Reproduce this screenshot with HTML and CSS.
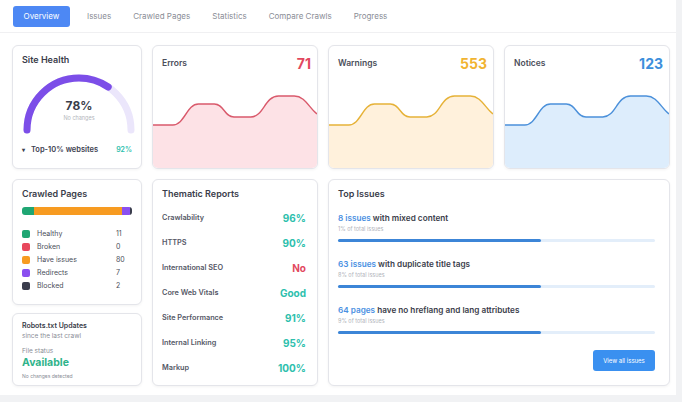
FILE: index.html
```html
<!DOCTYPE html>
<html>
  <head>
    <meta charset="utf-8">
    <title>Site Audit</title>
    <link rel="stylesheet" href="styles.css">
  </head>
  <body>
    <div class="app">
      <nav class="tabs">
        <a class="tab active">Overview</a>
        <a class="tab">Issues</a>
        <a class="tab">Crawled Pages</a>
        <a class="tab">Statistics</a>
        <a class="tab">Compare Crawls</a>
        <a class="tab">Progress</a>
      </nav>

      <main class="grid">
        <!-- site health gauge -->
        <section class="card health">
          <h2 class="card-title">Site Health</h2>
          <div class="gauge">
            <svg viewBox="0 0 114 62" width="114" height="62">
              <path d="M5 56 A52 52 0 0 1 109 56" fill="none" stroke="#ebe6fb" stroke-width="7" stroke-linecap="round"/>
              <path d="M5 56 A52 52 0 0 1 109 56" fill="none" stroke="#7c4ee8" stroke-width="7" stroke-linecap="round" pathLength="100" stroke-dasharray="69 200"/>
            </svg>
            <div class="gauge-text">
              <div class="gauge-value">78%</div>
              <div class="gauge-sub">No changes</div>
            </div>
          </div>
          <div class="health-foot">
            <span><span class="caret">&#9662;</span>Top-10% websites</span>
            <span class="teal">92%</span>
          </div>
        </section>

        <section class="card stat">
          <div class="stat-head">
            <span class="stat-name">Errors</span>
            <span class="stat-num red">71</span>
          </div>
          <svg class="spark" viewBox="0 0 166 76" preserveAspectRatio="none">
            <path d="M0 33 L20 33 C32 33 34 12 46 12 L62 12 C72 12 72 25 82 25 L99 25 C112 25 113 4 127 4 L143 4 C154 4 158 16 166 22 L166 76 L0 76 Z" fill="#fde2e6"/>
            <path d="M0 33 L20 33 C32 33 34 12 46 12 L62 12 C72 12 72 25 82 25 L99 25 C112 25 113 4 127 4 L143 4 C154 4 158 16 166 22" fill="none" stroke="#d95a6c" stroke-width="1.4"/>
          </svg>
        </section>

        <section class="card stat">
          <div class="stat-head">
            <span class="stat-name">Warnings</span>
            <span class="stat-num amber">553</span>
          </div>
          <svg class="spark" viewBox="0 0 166 76" preserveAspectRatio="none">
            <path d="M0 33 L20 33 C32 33 34 12 46 12 L62 12 C72 12 72 25 82 25 L99 25 C112 25 113 4 127 4 L143 4 C154 4 158 16 166 22 L166 76 L0 76 Z" fill="#fff1dc"/>
            <path d="M0 33 L20 33 C32 33 34 12 46 12 L62 12 C72 12 72 25 82 25 L99 25 C112 25 113 4 127 4 L143 4 C154 4 158 16 166 22" fill="none" stroke="#e6b238" stroke-width="1.4"/>
          </svg>
        </section>

        <section class="card stat">
          <div class="stat-head">
            <span class="stat-name">Notices</span>
            <span class="stat-num blue">123</span>
          </div>
          <svg class="spark" viewBox="0 0 166 76" preserveAspectRatio="none">
            <path d="M0 33 L20 33 C32 33 34 12 46 12 L62 12 C72 12 72 25 82 25 L99 25 C112 25 113 4 127 4 L143 4 C154 4 158 16 166 22 L166 76 L0 76 Z" fill="#ddedfc"/>
            <path d="M0 33 L20 33 C32 33 34 12 46 12 L62 12 C72 12 72 25 82 25 L99 25 C112 25 113 4 127 4 L143 4 C154 4 158 16 166 22" fill="none" stroke="#4b90da" stroke-width="1.4"/>
          </svg>
        </section>

        <div class="side">
          <section class="card crawled">
            <h2 class="card-title">Crawled Pages</h2>
            <div class="stack">
              <span class="seg green" style="width: 11%"></span>
              <span class="seg orange" style="width: 80%"></span>
              <span class="seg purple" style="width: 7%"></span>
              <span class="seg dark" style="width: 2%"></span>
            </div>
            <ul class="legend">
              <li><i class="dot green"></i><span class="legend-name">Healthy</span><span>11</span></li>
              <li><i class="dot red-bg"></i><span class="legend-name">Broken</span><span>0</span></li>
              <li><i class="dot orange"></i><span class="legend-name">Have issues</span><span>80</span></li>
              <li><i class="dot purple"></i><span class="legend-name">Redirects</span><span>7</span></li>
              <li><i class="dot dark"></i><span class="legend-name">Blocked</span><span>2</span></li>
            </ul>
          </section>

          <section class="card robots">
            <div class="robots-title">Robots.txt Updates</div>
            <div class="muted">since the last crawl</div>
            <div class="muted status-label">File status</div>
            <div class="available">Available</div>
            <div class="tiny">No changes detected</div>
          </section>
        </div>

        <section class="card thematic">
          <h2 class="card-title">Thematic Reports</h2>
          <ul class="reports">
            <li><span>Crawlability</span><b class="teal">96%</b></li>
            <li><span>HTTPS</span><b class="teal">90%</b></li>
            <li><span>International SEO</span><b class="red">No</b></li>
            <li><span>Core Web Vitals</span><b class="teal">Good</b></li>
            <li><span>Site Performance</span><b class="teal">91%</b></li>
            <li><span>Internal Linking</span><b class="teal">95%</b></li>
            <li><span>Markup</span><b class="teal">100%</b></li>
          </ul>
        </section>

        <section class="card top-issues">
          <h2 class="card-title">Top Issues</h2>
          <div class="issue">
            <div class="issue-text"><span class="link">8 issues</span> with mixed content</div>
            <div class="issue-share">1% of total issues</div>
            <div class="track"><div class="fill" style="width: 64%"></div></div>
          </div>
          <div class="issue">
            <div class="issue-text"><span class="link">63 issues</span> with duplicate title tags</div>
            <div class="issue-share">8% of total issues</div>
            <div class="track"><div class="fill" style="width: 64%"></div></div>
          </div>
          <div class="issue">
            <div class="issue-text"><span class="link">64 pages</span> have no hreflang and lang attributes</div>
            <div class="issue-share">9% of total issues</div>
            <div class="track"><div class="fill" style="width: 64%"></div></div>
          </div>
          <div class="actions">
            <button class="btn">View all issues</button>
          </div>
        </section>
      </main>
    </div>
  </body>
</html>
```

FILE: styles.css
```css
body {
  margin: 0;
  background-color: #f1f2f4;
  font-family: Inter, "Noto Sans", sans-serif;
  color: #3d4150;
}
.app {
  width: 676px;
  height: 395px;
  background-color: #fff;
}
.tabs {
  height: 33px;
  display: flex;
  align-items: center;
  gap: 22px;
  padding-left: 13px;
  border-bottom: 1px solid #f0f0f2;
  box-sizing: border-box;
}
.tab {
  font-size: 8px;
  color: #8a8d96;
}
.tab.active {
  background-color: #4d88f4;
  color: #fff;
  border-radius: 3px;
  height: 21px;
  width: 57px;
  display: flex;
  align-items: center;
  justify-content: center;
  margin-right: -5px;
}
.grid {
  display: grid;
  grid-template-columns: 130px 166px 166px 166px;
  grid-template-rows: 124px 207px;
  gap: 10px;
  padding: 12px 0 0 12px;
}
.card {
  background-color: #fff;
  border: 1px solid #e4e5ea;
  border-radius: 6px;
  box-shadow: 0 1px 3px rgba(0, 0, 0, 0.05);
  box-sizing: border-box;
  position: relative;
  overflow: hidden;
}
.card-title {
  margin: 0;
  font-size: 9px;
  font-weight: 600;
  color: #3a3d4a;
}

/* site health */
.health {
  padding: 8px 9px 0;
}
.gauge {
  position: relative;
  width: 114px;
  margin: 9px auto 0;
}
.gauge svg {
  display: block;
}
.gauge-text {
  position: absolute;
  left: 0;
  right: 0;
  top: 24px;
  text-align: center;
}
.gauge-value {
  font-size: 12px;
  font-weight: 700;
  color: #3a3d4a;
}
.gauge-sub {
  font-size: 5.5px;
  color: #b4b6bd;
  margin-top: 2px;
}
.health-foot {
  display: flex;
  justify-content: space-between;
  align-items: center;
  font-size: 7.5px;
  font-weight: 600;
  margin-top: 9px;
}
.health-foot .teal {
  font-size: 7px;
}
.caret {
  font-size: 6px;
  margin-right: 6px;
}

/* stat cards with area charts */
.stat-head {
  display: flex;
  justify-content: space-between;
  align-items: center;
  padding: 8px 6px 0 9px;
  height: 18px;
}
.stat-name {
  font-size: 8.5px;
  font-weight: 600;
  color: #4b4e5a;
}
.stat-num {
  font-size: 14px;
  font-weight: 700;
}
.spark {
  position: absolute;
  left: 0;
  bottom: 0;
  width: 100%;
  height: 76px;
}
.red { color: #e2485e; }
.amber { color: #f1b431; }
.blue { color: #3c8fdc; }
.teal { color: #2ec0ad; }

/* left column */
.side {
  display: flex;
  flex-direction: column;
  gap: 8px;
}
.crawled {
  height: 126px;
  padding: 8px 9px;
}
.stack {
  display: flex;
  height: 8px;
  border-radius: 3px;
  overflow: hidden;
  margin-top: 8px;
}
.green { background-color: #1fa673; }
.orange { background-color: #f79b21; }
.purple { background-color: #8a4ff0; }
.dark { background-color: #3a3d4d; }
.red-bg { background-color: #e8485d; }
.legend {
  list-style: none;
  margin: 12px 0 0;
  padding: 0;
}
.legend li {
  display: flex;
  align-items: center;
  height: 13px;
  font-size: 7px;
  color: #4b4e5a;
}
.dot {
  width: 8px;
  height: 8px;
  border-radius: 2px;
  margin-right: 7px;
}
.legend-name {
  width: 79px;
}
.robots {
  flex: 1;
  padding: 7px 9px;
}
.robots-title {
  font-size: 7px;
  font-weight: 600;
  color: #3a3d4a;
}
.muted {
  font-size: 6.5px;
  color: #8a8d96;
  margin-top: 2px;
}
.status-label {
  margin-top: 7px;
}
.available {
  font-size: 10.5px;
  font-weight: 700;
  color: #2fb38a;
  margin-top: 1px;
}
.tiny {
  font-size: 5px;
  color: #8a8d96;
  margin-top: 4px;
}

/* thematic reports */
.thematic {
  padding: 8px 11px 0 9px;
}
.reports {
  list-style: none;
  margin: 6px 0 0;
  padding: 0;
}
.reports li {
  display: flex;
  justify-content: space-between;
  align-items: center;
  height: 25px;
  font-size: 7.3px;
  font-weight: 600;
  color: #555866;
}
.reports b {
  font-size: 10px;
  font-weight: 700;
}

/* top issues */
.top-issues {
  grid-column: 3 / 5;
  padding: 8px 14px 0 9px;
}
.issue {
  margin-top: 14px;
}
.issue + .issue {
  margin-top: 17px;
}
.issue-text {
  font-size: 8.2px;
  font-weight: 600;
  color: #3a3d4a;
}
.link {
  color: #4a90e2;
}
.issue-share {
  font-size: 5.5px;
  color: #b0b3ba;
  margin-top: 3px;
}
.track {
  height: 3px;
  background-color: #e3eefa;
  border-radius: 2px;
  margin-top: 7px;
}
.fill {
  height: 100%;
  background-color: #3c85d7;
  border-radius: 2px;
}
.actions {
  display: flex;
  justify-content: flex-end;
  margin-top: 16px;
}
.btn {
  border: none;
  background-color: #3a90f0;
  color: #fff;
  font-family: inherit;
  font-size: 6px;
  height: 21px;
  width: 62px;
  border-radius: 3px;
}
```
